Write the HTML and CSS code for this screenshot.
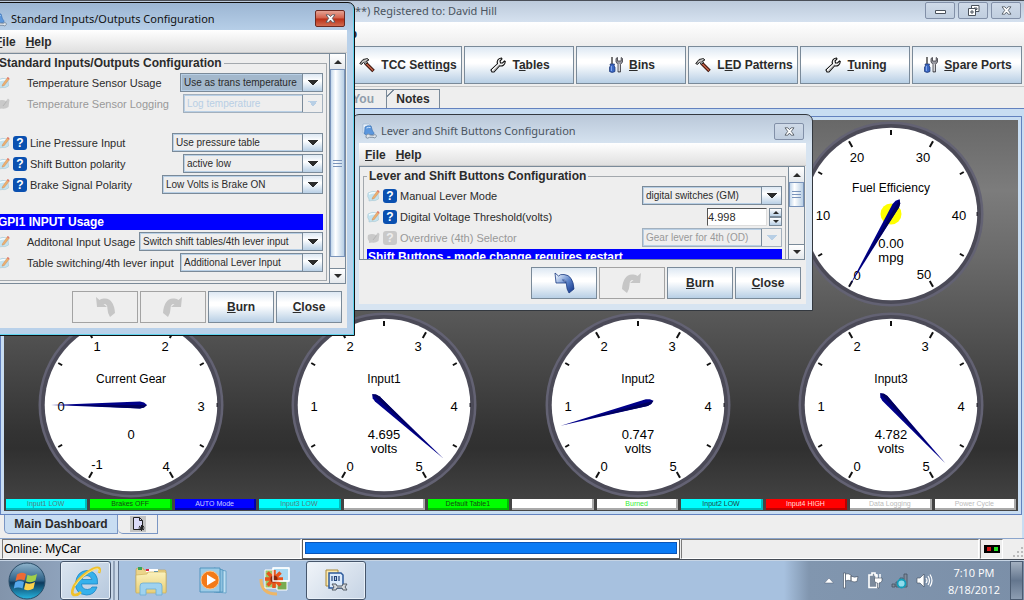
FILE: index.html
```html
<!DOCTYPE html>
<html lang="en">
<head>
<meta charset="utf-8">
<title>Main Dashboard</title>
<link rel="stylesheet" href="styles.css">
</head>
<body>
<svg class="defs" aria-hidden="true">
  <defs>
    <linearGradient id="g-orb" x1="0" y1="0" x2="0" y2="1"><stop offset="0" stop-color="#8fb4cc"/><stop offset=".48" stop-color="#2f6288"/><stop offset=".55" stop-color="#0d3a5c"/><stop offset="1" stop-color="#27b5e0"/></linearGradient>
    <linearGradient id="g-folder" x1="0" y1="0" x2="0" y2="1"><stop offset="0" stop-color="#fbf2bd"/><stop offset="1" stop-color="#e8ce76"/></linearGradient>
    <linearGradient id="g-undo" x1="0" y1="0" x2="1" y2="1"><stop offset=".1" stop-color="#e4eefc"/><stop offset=".55" stop-color="#5b82c8"/><stop offset="1" stop-color="#0c2f86"/></linearGradient>
    <g id="ticks" stroke="#111" stroke-width="2">
      <path d="M0-84V-79"/>
      <path d="M0-84V-77.500" transform="rotate(30)"/><path d="M0-84V-77.500" transform="rotate(-30)"/>
      <path d="M0-84V-77.500" transform="rotate(150)"/><path d="M0-84V-77.500" transform="rotate(-150)"/>
      <path d="M0-84V-79.500" transform="rotate(60)"/><path d="M0-84V-79.500" transform="rotate(-60)"/>
      <path d="M0-84V-79.500" transform="rotate(120)"/><path d="M0-84V-79.500" transform="rotate(-120)"/>
      <path d="M0-87V-85.500" transform="rotate(90)" stroke="#33323c" stroke-width="4"/>
    </g>
    <g id="face">
      <circle r="92.500" fill="#636273"/><circle r="90" fill="#4b4a57"/><circle r="86.300" fill="#fff"/>
      <use href="#ticks"/>
    </g>
    <g id="needle"><path d="M0 80L-3.500-9L-2.500-13L0-16L2.500-13L3.500-9Z" fill="#000089"/><path d="M0 60L0-16L2.500-13L3.500-9Z" fill="#00005c"/></g>
    <symbol id="i-hammer" viewBox="0 0 16 16"><path d="M6.500 6L14.500 14" stroke="#3b1208" stroke-width="3.600"/><path d="M6.500 6L14 13.500" stroke="#c4624a" stroke-width="1.600"/><path d="M.7 6.500L4 2.500L8.500 1.500L10 3L7.500 4L8.500 5.500L6.500 7.500L4.500 5.500L2.500 7.500Z" fill="#8d8d8d" stroke="#222" stroke-width=".9"/><path d="M3 5L8 2.600" stroke="#ddd"/></symbol>
    <symbol id="i-wrench" viewBox="0 0 16 16"><path d="M1 13L7.500 7C6.500 4 8 1.500 11.500 1L12 2L10 4L10.500 6L12.500 6L14.500 4L15.300 4.500C15 8 12.500 9.500 9.500 8.800L4 15L2 15Z" fill="#f2f2f2" stroke="#111" stroke-width="1.100"/><path d="M3.500 13.800L9.500 8" stroke="#999"/><path d="M2 13L8.500 7" stroke="#fff"/></symbol>
    <symbol id="i-tools" viewBox="0 0 14 16"><path d="M3 0V8" stroke="#555" stroke-width="1.600"/><path d="M1 7H5.500L5 9L6 10V14.500Q3 16.500.5 14.500V10L1.500 9Z" fill="#3b68c4" stroke="#18316f" stroke-width=".7"/><path d="M2.500 9V14" stroke="#83a6ea"/><path d="M7 1.500V5L9 7.500V15H11.500V7.500L13.500 5V1.500L12.200.5V4H8.500V.5Z" fill="#9a9aa2" stroke="#3a3a40" stroke-width=".8"/><path d="M10.200 7V14" stroke="#eee"/></symbol>
    <symbol id="i-note" viewBox="0 0 13 13"><path d="M1 4Q5 1 11 3.500L11.500 10Q8 12.500 5 11.500L2 12L2 10Q0 8 1 4Z" fill="#c3e3f0" stroke="#a9c8d4" stroke-width=".6"/><path d="M2 5Q6 3 9 4" stroke="#f4fcff" stroke-width="1.500" fill="none"/><path d="M5.500 8.500L10.500 1.500L12.300 3L7.300 9.500L5 10.200Z" fill="#efb06f" stroke="#c28755" stroke-width=".4"/><path d="M10 2.300L11.700 3.600L12.500 2.500L11 1Z" fill="#e0776c"/></symbol>
    <symbol id="i-note-off" viewBox="0 0 13 13"><path d="M1 4Q5 2 9 4L11 1.500L12.500 3L11.500 10Q8 12.500 5 11.500L2 12L2 10Q0 8 1 4Z" fill="#c9c9c9"/><path d="M6 9L9.500 4.500" stroke="#b4b4b4"/></symbol>
    <symbol id="i-undo" viewBox="0 0 24 24"><path d="M3 2L4 12L14 12L10.500 9Q14.500 8.500 14.500 14Q14.500 18 17 22L22 18Q21 4 12 3.500Q8 3 6.500 5Z"/></symbol>
    <symbol id="i-app" viewBox="0 0 16 16"><path d="M2 1H8L10 3V10H2Z" fill="#e9f1fa" stroke="#9db4cd" stroke-width=".7"/><path d="M4 4Q6.500 2 10 3L11.500 8Q13 9 13 11L8 13L3.500 11Z" fill="#5b97dd" stroke="#3f76b8" stroke-width=".7"/><path d="M5.500 5Q7.500 4 9.500 4.500" stroke="#cfe6ff" fill="none"/><path d="M5 12.500Q7 9.500 9 12L12.500 12.300Q15 10.500 15.400 13.500Q14 16 12 14.300L8.500 14.300Q6.500 16 5 14.500Z" fill="#dfe5eb" stroke="#6d7f92" stroke-width=".8"/></symbol>
    <symbol id="i-x" viewBox="0 0 13 11"><path d="M1 1H4.500L6.500 3.200L8.500 1H12L8.700 5.300L12 10H8.500L6.500 7.400L4.500 10H1L4.300 5.300Z" fill="#fff" stroke="#4a525c"/></symbol>
  </defs>
</svg>

<div class="desktop">
  <main class="app">
    <header class="app-title">
      <span class="app-name">**) Registered to: David Hill</span>
      <div class="win-controls">
        <button class="win-btn" aria-label="Minimize"><svg width="13" height="11" viewBox="0 0 13 11"><path d="M1.500 5.500H11.500V8.500H1.500Z" fill="#fff" stroke="#4a525c"/></svg></button>
        <button class="win-btn" aria-label="Restore"><svg width="13" height="11" viewBox="0 0 13 11"><path d="M4.500.5H12V6.500H4.500Z" fill="#fff" stroke="#4a525c"/><path d="M7 3H10V4.500H7Z" fill="none" stroke="#4a525c"/><path d="M1.500 3.500H8.500V10.500H1.500Z" fill="#fff" stroke="#4a525c"/><path d="M4 6H6V8H4Z" fill="#fff" stroke="#4a525c"/></svg></button>
        <button class="win-btn" aria-label="Close"><svg width="11" height="9"><use href="#i-x"/></svg></button>
      </div>
    </header>
    <nav class="app-menu"><button class="menu-item">Help</button></nav>
    <div class="toolbar">
      <button class="btn tool"><svg width="16" height="16"><use href="#i-hammer"/></svg><span>TCC Setti<u>n</u>gs</span></button>
      <button class="btn tool"><svg width="16" height="16"><use href="#i-wrench"/></svg><span>T<u>a</u>bles</span></button>
      <button class="btn tool"><svg width="14" height="16"><use href="#i-tools"/></svg><span><u>B</u>ins</span></button>
      <button class="btn tool"><svg width="16" height="16"><use href="#i-hammer"/></svg><span>L<u>E</u>D Patterns</span></button>
      <button class="btn tool"><svg width="16" height="16"><use href="#i-wrench"/></svg><span><u>T</u>uning</span></button>
      <button class="btn tool"><svg width="14" height="16"><use href="#i-tools"/></svg><span><u>S</u>pare Ports</span></button>
    </div>
    <div class="top-tabs">
      <button class="tab tab-off" disabled>You</button>
      <button class="tab tab-notes">Notes</button>
    </div>
    <section class="workspace">
      <div class="frame">
        <div class="canvas">
          <div class="gauges">
            <svg class="gauge gauge-fuel" width="186" height="186" viewBox="-93 -93 186 186">
              <use href="#face"/><circle r="10.500" fill="#ff0"/>
              <g class="num"><text x="-34" y="-52">20</text><text x="32" y="-52">30</text><text x="-68" y="6">10</text><text x="68" y="6">40</text><text x="-34" y="66">0</text><text x="33" y="65">50</text><text y="34">0.00</text><text y="48">mpg</text></g>
              <text class="name" y="-22">Fuel Efficiency</text>
              <use href="#needle" transform="rotate(30) scale(1.06)"/>
            </svg>
            <svg class="gauge" width="186" height="186" viewBox="-93 -93 186 186">
              <use href="#face"/>
              <g class="num"><text x="-34" y="-54">1</text><text x="34" y="-54">2</text><text x="-70" y="6">0</text><text x="70" y="6">3</text><text x="-34" y="64">-1</text><text x="35" y="66">4</text><text y="34">0</text></g>
              <text class="name" y="-22">Current Gear</text>
              <use href="#needle" transform="rotate(90)"/>
            </svg>
            <svg class="gauge" width="186" height="186" viewBox="-93 -93 186 186">
              <use href="#face"/>
              <g class="num"><text x="-34" y="-54">2</text><text x="34" y="-54">3</text><text x="-70" y="6">1</text><text x="70" y="6">4</text><text x="-34" y="66">0</text><text x="35" y="66">5</text><text y="34">4.695</text><text y="48">volts</text></g>
              <text class="name" y="-22">Input1</text>
              <use href="#needle" transform="rotate(312)"/>
            </svg>
            <svg class="gauge" width="186" height="186" viewBox="-93 -93 186 186">
              <use href="#face"/>
              <g class="num"><text x="-34" y="-54">2</text><text x="34" y="-54">3</text><text x="-70" y="6">1</text><text x="70" y="6">4</text><text x="-34" y="66">0</text><text x="35" y="66">5</text><text y="34">0.747</text><text y="48">volts</text></g>
              <text class="name" y="-22">Input2</text>
              <use href="#needle" transform="rotate(75)"/>
            </svg>
            <svg class="gauge" width="186" height="186" viewBox="-93 -93 186 186">
              <use href="#face"/>
              <g class="num"><text x="-34" y="-54">2</text><text x="34" y="-54">3</text><text x="-70" y="6">1</text><text x="70" y="6">4</text><text x="-34" y="66">0</text><text x="35" y="66">5</text><text y="34">4.782</text><text y="48">volts</text></g>
              <text class="name" y="-22">Input3</text>
              <use href="#needle" transform="rotate(317)"/>
            </svg>
          </div>
          <div class="leds">
            <span class="led cyan">Input1 LOW</span><span class="led green">Brakes OFF</span><span class="led blue">AUTO Mode</span><span class="led cyan">Input3 LOW</span><span class="led"></span><span class="led green">Default Table1</span><span class="led"></span><span class="led burned">Burned</span><span class="led cyan dark">Input2 LOW</span><span class="led red">Input4 HIGH</span><span class="led">Data Logging</span><span class="led">Power Cycle</span>
          </div>
        </div>
      </div>
      <div class="bottom-tabs">
        <button class="tab-main">Main Dashboard</button>
        <button class="tab-new" aria-label="New dashboard"><svg width="16" height="16" viewBox="0 0 16 16"><path d="M0 0H16V16H0Z" fill="#c4c4c4"/><path d="M3.500 1.500H9.500L12.500 4.500V13.500H3.500Z" fill="#dcdcf8" stroke="#222"/><path d="M9.500 1.500V4.500H12.500" fill="none" stroke="#222"/><path d="M11.500 9V15M9 10L14 14M14 10L9 14M8.500 12H14.500" stroke="#222"/></svg></button>
      </div>
    </section>
    <footer class="status">
      <span class="cell cell-text">Online: MyCar</span>
      <span class="cell cell-progress"><span class="bar"></span></span>
      <span class="cell cell-empty"></span>
      <span class="cell cell-lights"><svg width="16" height="8" viewBox="0 0 16 8"><path d="M0 0H16V8H0Z"/><path d="M3 2H7V6H3Z" fill="#d01818"/><path d="M10 2H14V6H10Z" fill="#20e020"/></svg></span>
      <svg class="grip" width="12" height="12" viewBox="0 0 12 12" fill="#bbb"><path d="M9 0h2v2h-2zM5 4h2v2h-2zM9 4h2v2h-2zM1 8h2v2h-2zM5 8h2v2h-2zM9 8h2v2h-2z"/></svg>
    </footer>
  </main>

  <section class="dialog dialog-lever">
    <header class="dlg-title">
      <svg width="16" height="16"><use href="#i-app"/></svg><h2>Lever and Shift Buttons Configuration</h2>
      <button class="win-btn" aria-label="Close"><svg width="11" height="9"><use href="#i-x"/></svg></button>
    </header>
    <div class="dlg-body">
      <nav class="dlg-menu"><button class="menu-item"><u>F</u>ile</button><button class="menu-item"><u>H</u>elp</button></nav>
      <div class="scroll scroll-short">
        <fieldset>
          <legend>Lever and Shift Buttons Configuration</legend>
          <div class="row"><svg width="13" height="13"><use href="#i-note"/></svg><button class="help" aria-label="Help">?</button><label for="mode">Manual Lever Mode</label><span class="combo w140"><select id="mode"><option>digital switches (GM)</option></select></span></div>
          <div class="row"><svg width="13" height="13"><use href="#i-note"/></svg><button class="help" aria-label="Help">?</button><label for="thr">Digital Voltage Threshold(volts)</label><span class="spinner"><input id="thr" value="4.998"><span class="spin-btns"><button class="spin up" aria-label="Increase"></button><button class="spin down" aria-label="Decrease"></button></span></span></div>
          <div class="row off"><svg width="13" height="13"><use href="#i-note-off"/></svg><button class="help" disabled aria-label="Help">?</button><label for="od">Overdrive (4th) Selector</label><span class="combo w140"><select id="od" disabled><option>Gear lever for 4th (OD)</option></select></span></div>
          <h3>Shift Buttons - mode change requires restart</h3>
        </fieldset>
        <div class="sbar"><button class="sarrow up" aria-label="Scroll up"></button><span class="thumb thumb-short"></span><button class="sarrow down" aria-label="Scroll down"></button></div>
      </div>
      <div class="actions">
        <button class="btn" aria-label="Undo"><svg width="24" height="24" fill="url(#g-undo)" stroke="#1b3a80" stroke-width=".8"><use href="#i-undo"/></svg></button>
        <button class="btn" disabled aria-label="Redo"><svg class="flip" width="24" height="24" fill="#c6c6c6"><use href="#i-undo"/></svg></button>
        <button class="btn"><span><u>B</u>urn</span></button>
        <button class="btn"><span><u>C</u>lose</span></button>
      </div>
    </div>
  </section>

  <section class="dialog dialog-io">
    <header class="dlg-title">
      <svg width="16" height="16"><use href="#i-app"/></svg><h2>Standard Inputs/Outputs Configuration</h2>
      <button class="win-btn hot" aria-label="Close"><svg width="11" height="9"><use href="#i-x"/></svg></button>
    </header>
    <div class="dlg-body">
      <nav class="dlg-menu"><button class="menu-item"><u>F</u>ile</button><button class="menu-item"><u>H</u>elp</button></nav>
      <div class="scroll scroll-tall">
        <fieldset>
          <legend>Standard Inputs/Outputs Configuration</legend>
          <div class="row plain"><svg width="13" height="13"><use href="#i-note"/></svg><label for="tsu">Temperature Sensor Usage</label><span class="combo w143 focus"><select id="tsu"><option>Use as trans temperature</option></select></span></div>
          <div class="row plain off"><svg width="13" height="13"><use href="#i-note-off"/></svg><label for="tsl">Temperature Sensor Logging</label><span class="combo w140 pale"><select id="tsl" disabled><option>Log temperature</option></select></span></div>
          <div class="spacer"></div>
          <div class="row"><svg width="13" height="13"><use href="#i-note"/></svg><button class="help" aria-label="Help">?</button><label for="lpi">Line Pressure Input</label><span class="combo w151"><select id="lpi"><option>Use pressure table</option></select></span></div>
          <div class="row"><svg width="13" height="13"><use href="#i-note"/></svg><button class="help" aria-label="Help">?</button><label for="sbp">Shift Button polarity</label><span class="combo w140"><select id="sbp"><option>active low</option></select></span></div>
          <div class="row"><svg width="13" height="13"><use href="#i-note"/></svg><button class="help" aria-label="Help">?</button><label for="bsp">Brake Signal Polarity</label><span class="combo w161"><select id="bsp"><option>Low Volts is Brake ON</option></select></span></div>
          <div class="spacer"></div>
          <h3>GPI1 INPUT Usage</h3>
          <div class="row plain"><svg width="13" height="13"><use href="#i-note"/></svg><label for="aiu">Additonal Input Usage</label><span class="combo w184"><select id="aiu"><option>Switch shift tables/4th lever input</option></select></span></div>
          <div class="row plain"><svg width="13" height="13"><use href="#i-note"/></svg><label for="tsw">Table switching/4th lever input</label><span class="combo w143"><select id="tsw"><option>Additional Lever Input</option></select></span></div>
        </fieldset>
        <div class="sbar"><button class="sarrow up" aria-label="Scroll up"></button><span class="thumb thumb-tall"></span><button class="sarrow down" aria-label="Scroll down"></button></div>
      </div>
      <div class="actions">
        <button class="btn" disabled aria-label="Undo"><svg width="24" height="24" fill="#c6c6c6"><use href="#i-undo"/></svg></button>
        <button class="btn" disabled aria-label="Redo"><svg class="flip" width="24" height="24" fill="#c6c6c6"><use href="#i-undo"/></svg></button>
        <button class="btn"><span><u>B</u>urn</span></button>
        <button class="btn"><span><u>C</u>lose</span></button>
      </div>
    </div>
  </section>

  <footer class="taskbar">
    <button class="task start" aria-label="Start"><svg width="38" height="38" viewBox="0 0 38 38"><circle cx="19" cy="19" r="18" fill="url(#g-orb)" stroke="#2a4d68"/><path d="M9 12.500Q13.500 9.500 18 12L16.500 18.500Q12 16.500 7.500 19Z" fill="#ee6a34"/><path d="M19.500 12.800Q24 15 29 12L27.500 18.500Q22.500 21.500 18 19.200Z" fill="#a1cf49"/><path d="M7 20.500Q11.500 18 16 20L14.500 26.500Q10 24.500 5.800 26.500Z" fill="#56a8ec"/><path d="M17.500 20.800Q22 23 27 20L25.500 26.500Q20.500 29.500 16 27.200Z" fill="#fcd14c"/></svg></button>
    <button class="task boxed ie" aria-label="Internet Explorer"><svg width="34" height="34" viewBox="0 0 34 34"><path d="M28.500 20H12.500Q13 25.500 18.500 25.500Q22 25.500 23 23H28Q25.500 31 17.500 31Q6 30 6.500 19Q8 7 18 6.500Q29.500 7.500 28.500 20ZM12.800 15.500H22.800Q22 11.500 18 11.500Q13.500 11.500 12.800 15.500Z" fill="#36b1ec" stroke="#1b84c4" stroke-width=".8"/><path d="M30 9Q33 1 24 5Q12 11 5 22Q1 31 6 31Q9 31 12 28" fill="none" stroke="#f0c12c" stroke-width="2.600"/><path d="M30 8Q31 3 25 5.500Q13 11 6 22" fill="none" stroke="#fff0a0" stroke-width=".8"/></svg></button>
    <span class="stack"></span>
    <button class="task" aria-label="Windows Explorer"><svg width="34" height="30" viewBox="0 0 34 30"><path d="M2 4Q2 2 4 2H9L10 4H31Q32 4 32 6V26H2Z" fill="#ecd58a" stroke="#c3a456" stroke-width=".7"/><path d="M4 1H8V4H4Z" fill="#3aa45a"/><path d="M12 3H24V6H12Z" fill="#fff"/><path d="M12 3H15V5H12Z" fill="#d24"/><path d="M20 5H24V7H20Z" fill="#38c"/><path d="M2 9L13 8L14 6H31L32 7V27H2Z" fill="url(#g-folder)" stroke="#cdb15d" stroke-width=".7"/><path d="M6 29V20Q6 17 9 17H25Q28 17 28 20V29H22V23H12V29Z" fill="#9fd2ef" stroke="#6bacd4" stroke-width=".8"/></svg></button>
    <button class="task" aria-label="Windows Media Player"><svg width="30" height="28" viewBox="0 0 30 28"><path d="M18 2L28 4V26L18 25Z" fill="#bfe0f2" stroke="#5c9dc4" stroke-width=".8"/><path d="M16 1L25 3V25L16 25Z" fill="#8dc2e0" stroke="#4b90bb" stroke-width=".8"/><path d="M2 1H22V25H2Z" fill="#9ccbe6" stroke="#4b90bb" stroke-width=".9"/><circle cx="12" cy="13" r="9" fill="#f37a18" stroke="#fbc48b"/><path d="M9 7.500L18 13L9 18.500Z" fill="#fff"/></svg></button>
    <button class="task" aria-label="Photo viewer"><svg width="32" height="30" viewBox="0 0 32 30"><path d="M2 13Q2 28 18 28" fill="none" stroke="#edb667" stroke-width="3"/><path d="M6 4H20V22H6Z" fill="#9bc76b" stroke="#fff"/><path d="M14 2H30V15H14Z" fill="#a9d8f0" stroke="#fff"/><path d="M18 15H28V24H18Z" fill="#7aab50" stroke="#fff"/><g stroke="#e8541a" stroke-width="3.500"><path d="M15 4V22M6 13H24M8.500 6.500L21.500 19.500M21.500 6.500L8.500 19.500"/></g><circle cx="15" cy="13" r="3.500" fill="#862408"/><path d="M14 2H30V15H14Z" fill="none" stroke="#fff" stroke-width="1.300"/></svg></button>
    <button class="task boxed active" aria-label="Tuning application"><svg width="26" height="26" viewBox="0 0 26 26"><path d="M3 2H15V18H3Z" fill="#fbe9ae" stroke="#a98838"/><path d="M6 5H18L20 7V20H6Z" fill="#dcebfc" stroke="#2c5a9c" stroke-width="1.500"/><path d="M9 8V13M16 8V13M11.500 8.500H13.500V12.500H11.500Z" fill="none" stroke="#23447a" stroke-width="1.200"/><path d="M9 16L13 16L14 18H19L20 16L24 16L22 19L24 22H20L19 20H14L13 22H9L11 19Z" fill="#d5d9dd" stroke="#555c66"/></svg></button>
    <div class="tray">
      <svg width="10" height="6" viewBox="0 0 10 6"><path d="M5 0L9.500 5H.5Z" fill="#fff" stroke="#50607a" stroke-width=".5"/></svg>
      <svg width="17" height="17" viewBox="0 0 17 17"><path d="M1.500 1H3.500V16H1.500Z" fill="#fff" stroke="#3c4a5c" stroke-width=".6"/><path d="M3.500 2Q6 1 9 3V9Q6 7.500 3.500 9ZM9 4Q12 6 16 4.500L15 9.500Q12 10.500 9 9Z" fill="#fff" stroke="#3c4a5c" stroke-width=".6"/></svg>
      <svg width="16" height="17" viewBox="0 0 16 17"><path d="M2 3H5V1H8V3H10V15.500H2Z" fill="#7b8a9c" stroke="#fff" stroke-width="1.600"/><path d="M9 2V6M13 2V6" stroke="#fff" stroke-width="1.500"/><path d="M7.500 6H15V9Q14 11 12 11V16H10.500V11Q8 11 7.500 9Z" fill="#fff" stroke="#3c4a5c" stroke-width=".6"/></svg>
      <svg width="17" height="16" viewBox="0 0 17 16"><path d="M1 11H4V14H1ZM5 9H8V14H5ZM9 5H12V14H9ZM13 1H16V14H13Z" fill="#7e8b9b" stroke="#44525f" stroke-width=".8"/><circle cx="10.500" cy="10.500" r="4" fill="#8fdcec" stroke="#159cb8" stroke-width="1.800"/></svg>
      <svg width="17" height="15" viewBox="0 0 17 15"><path d="M1 5H4L8 1V14L4 10H1Z" fill="#fff" stroke="#3c4a5c" stroke-width=".6"/><path d="M10 5Q12 7.500 10 10M12 3Q15 7.500 12 12M14 1.500Q18 7.500 14 13.500" fill="none" stroke="#fff" stroke-width="1.200"/></svg>
      <time class="clock"><span>7:10 PM</span><span>8/18/2012</span></time>
      <button class="peek" aria-label="Show desktop"></button>
    </div>
  </footer>
</div>
</body>
</html>
```
FILE: styles.css
```css
* { box-sizing: border-box; }
body { margin: 0; background: #eee; color: #2b2b2b; font: 12px "Liberation Sans", Arial, sans-serif; }
button, select, input { font: inherit; color: inherit; margin: 0; padding: 0; border: 0; background: none; }
h2, h3 { margin: 0; }
svg { display: block; flex: none; }
.defs { position: absolute; width: 0; height: 0; }

.desktop { position: relative; display: flex; flex-direction: column; min-height: 100vh; overflow: hidden; }
.app { flex: 1; display: flex; flex-direction: column; background: #eee; }

/* main window */
.app-title { display: flex; justify-content: space-between; align-items: flex-start; height: 22px; padding: 0 3px 0 355px; border-top: 1px solid #4a4f58; background: linear-gradient(#bccadb, #d5e1ef); }
.app-name { font: 11px/20px "Noto Sans", sans-serif; color: #4a5460; }
.win-controls { display: flex; gap: 3px; padding-top: 1px; }
.win-btn { display: flex; align-items: center; justify-content: center; width: 30px; height: 17px; border: 1px solid #8290a8; border-radius: 2px; background: linear-gradient(#cfdae8, #c0cedf); }
.win-btn.hot { border-color: #6b2a22; background: linear-gradient(#e5a394, #d3604a 48%, #b92f17 52%, #d26b50); }
.app-menu { display: flex; align-items: center; height: 23px; padding-left: 331px; background: linear-gradient(#fff, #eee); }
.menu-item { font-weight: bold; }
.toolbar { display: grid; grid-template-columns: repeat(6, 1fr); gap: 2px; padding: 1px 2px 2px 352px; border-bottom: 1px solid #c6c6c6; }
.btn { display: flex; align-items: center; justify-content: center; gap: 6px; border: 1px solid #7a8a99; background: linear-gradient(#dde8f3, #fff 35%, #fff 45%, #b8cfe5); font-weight: bold; }
.btn:disabled { border-color: #a3a3a3; background: #eee; }
.tool { height: 38px; padding-left: 2px; }
.top-tabs { display: flex; height: 21px; padding: 2px 0 0 330px; }
.tab { border: 1px solid #7a8a99; border-bottom: 0; font-weight: bold; }
.tab-off { width: 57px; padding-right: 12px; text-align: right; color: #8f9dab; }
.tab-notes { width: 53px; border-left: 0; background: linear-gradient(135deg, #eee 4px, #7a8a99 4px, #7a8a99 5px, #eee 5px); }
.workspace { flex: 1; padding: 7px 2px 0 0; border-top: 1px solid #6382bf; border-bottom: 1px solid #8ba5cc; background: #c8ddf2; }
.frame { padding: 3px; border: 1px solid #6382bf; }
.canvas { padding: 1px 0; background: linear-gradient(#686868, #7c7c7c 18%, #6a6a6a 35%, #333 80%, #303030 84%, #464646); }
.gauges { display: grid; grid-template-columns: repeat(4, 1fr); justify-items: center; row-gap: 5px; }
.gauge-fuel { grid-column: 4; }
.gauge text { text-anchor: middle; fill: #000; }
.num { font-size: 13px; }
.name { font-size: 12px; }
.leds { display: grid; grid-template-columns: repeat(12, 1fr); gap: 3px; padding: 1px 2px 0; }
.led { height: 11px; border: solid #aaa; border-width: 0 2px 2px 0; background: #fff; color: #bbb; font-size: 7px; line-height: 10px; text-align: center; white-space: nowrap; }
.led.cyan { border-color: #00bcbc; background: #0ff; color: #587c7c; }
.led.cyan.dark { color: #244; }
.led.green { border-color: #0b0; background: #0f0; color: #154a15; }
.led.blue { border-color: #00a; background: #00f; color: #ccf; }
.led.red { border-color: #b00; background: #f00; color: #fdd; }
.led.burned { color: #3e3; }
.bottom-tabs { display: flex; align-items: flex-start; height: 23px; padding-left: 4px; background: #eee; }
.tab-main, .tab-new { height: 19px; border: 1px solid #7a96c4; border-top: 0; border-bottom-left-radius: 5px; font-weight: bold; }
.tab-main { width: 114px; background: #c8ddf2; }
.tab-new { display: flex; align-items: center; justify-content: center; width: 40px; border-left: 0; }
.status { display: grid; grid-template-columns: 299px 378px 1fr 23px 20px; gap: 1px; height: 21px; padding: 0 0 1px 2px; border-bottom: 1px solid #444b55; }
.cell { border: 1px solid; border-color: #7b7b7b #fff #fff #7b7b7b; }
.cell-text { padding-left: 1px; line-height: 18px; color: #000; }
.cell-progress { padding: 2px; border-color: #5a5a5a; background: #fff; }
.bar { display: block; height: 12px; border: 1px solid #0a55b8; background: #0a7bf5; }
.cell-lights { display: flex; align-items: center; justify-content: center; }
.grip { align-self: end; justify-self: end; }

/* dialogs */
.dialog { position: absolute; padding: 0 6px 6px; border: 1px solid #33383f; border-radius: 7px 7px 0 0; }
.dialog-lever { left: 352px; top: 114px; width: 461px; background: linear-gradient(#bac8d9, #d7e4f1 30px); }
.dialog-io { left: -18px; top: 2px; width: 373px; padding: 0 7px 7px 6px; border-color: #111; background: linear-gradient(#9cb6d3, #b9d1ea 30px); box-shadow: inset -1px -1px #5fd3ee; }
.dlg-title { display: flex; align-items: center; gap: 4px; height: 28px; padding: 4px 2px 0; }
.dialog-io .dlg-title { height: 27px; }
.dlg-title h2 { flex: 1; font: 11px/20px "Noto Sans", sans-serif; color: #4a5460; white-space: nowrap; }
.dialog-io h2 { color: #111; }
.dlg-body { background: #eee; }
.dlg-menu { display: flex; gap: 10px; height: 23px; padding: 1px 6px 0; border-bottom: 1px solid #ccc; background: linear-gradient(#fff, #e0e0e0); }
.scroll { display: flex; margin-right: 1px; border: 1px solid #7a8a99; overflow: hidden; }
.scroll-short { height: 94px; }
.scroll-tall { height: 231px; }
fieldset { flex: 1; min-width: 0; display: flex; flex-direction: column; gap: 2px; margin: 2px 2px 2px 3px; padding: 2px 3px 0; border: 1px solid #a3a8ad; }
.scroll-short fieldset { height: 110px; }
legend { padding: 0 2px; font-weight: bold; line-height: 15px; }
.row { display: flex; align-items: center; gap: 3px; height: 19px; font-size: 11px; white-space: nowrap; }
.row label { flex: 1; }
.plain { gap: 17px; }
.plain label { margin-right: -17px; }
.off { color: #999; }
.help { width: 14px; height: 14px; border-radius: 3px; background: #0a50b0; color: #fff; font-size: 12px; font-weight: bold; line-height: 14px; }
.help:disabled { background: #c9c9c9; color: #eee; }
.spacer { height: 16px; }
h3 { height: 16px; padding-left: 1px; background: #00f; color: #fff; font-size: 12px; line-height: 17px; }
.combo { display: flex; height: 19px; border: 1px solid #7a8a99; background: #eee; }
.combo select { flex: 1; min-width: 0; appearance: none; padding-left: 2px; border: 1px solid #b8cfe5; border-right: 0; border-radius: 0; font-size: 10px; opacity: 1; }
.combo::after { content: ""; flex: none; width: 19px; border-left: 1px solid #7a8a99; background: conic-gradient(from 315deg at 50% 100%, #2b2b2b 90deg, transparent 90deg) 50% 6px / 10px 5px no-repeat, linear-gradient(#dde8f3, #fff 40%, #b8cfe5); }
.off .combo { border-color: #a3b0bd; }
.off .combo::after { background: conic-gradient(from 315deg at 50% 100%, #b8cfe5 90deg, transparent 90deg) 50% 6px / 10px 5px no-repeat; }
.pale { color: #b8cfe5; }
.focus select { background: #a3b8cc; }
.w140 { width: 140px; }
.w143 { width: 143px; }
.w151 { width: 151px; }
.w161 { width: 161px; }
.w184 { width: 184px; }
.spinner { display: flex; gap: 2px; width: 75px; height: 18px; }
.spinner input { flex: 1; min-width: 0; border: 1px solid; border-color: #555 #ddd #ddd #555; background: #fff; }
.spin-btns { display: flex; flex-direction: column; width: 13px; }
.spin { flex: 1; display: flex; align-items: center; justify-content: center; border: 1px solid #7a8a99; background: linear-gradient(#fff, #b8cfe5); }
.spin::after, .sarrow::after { content: ""; border: 4px solid transparent; border-top-color: #2b2b2b; border-bottom-width: 0; }
.spin::after { border-width: 3px 3px 0; }
.spin.up::after, .sarrow.up::after { transform: rotate(180deg); }
.sbar { display: flex; flex-direction: column; width: 16px; border-left: 1px solid #7a8a99; }
.sarrow { display: flex; align-items: center; justify-content: center; flex: none; height: 15px; background: linear-gradient(#fff, #e4e8ec); }
.sarrow.down { margin-top: auto; border-top: 1px solid #7a8a99; }
.thumb { border: 1px solid #7a94bb; background: linear-gradient(#7a94bb, #7a94bb) center calc(50% - 3px) / 9px 1px no-repeat, linear-gradient(#7a94bb, #7a94bb) center / 9px 1px no-repeat, linear-gradient(#7a94bb, #7a94bb) center calc(50% + 3px) / 9px 1px no-repeat, linear-gradient(90deg, #c4d8ec, #fff 35%, #b8cfe5); }
.thumb-short { height: 25px; }
.thumb-tall { height: 188px; }
.actions { display: flex; justify-content: flex-end; gap: 2px; padding: 7px 5px 5px; }
.actions .btn { width: 66px; height: 32px; }
.flip { transform: scaleX(-1); }

/* taskbar */
.taskbar { display: flex; align-items: stretch; height: 40px; background: linear-gradient(90deg, #8294ab, #8ea2bb 60px, #a7c1df 62px, #a7c1df calc(100% - 240px), #8196af calc(100% - 215px), #7b8fa8); border-top: 1px solid #c6d4e4; }
.task { display: flex; align-items: center; justify-content: center; width: 62px; }
.start { width: 54px; margin-right: 6px; }
.boxed { border: 1px solid #46566c; border-radius: 3px; background: linear-gradient(135deg, #dbe5f0, #b6c8dd); box-shadow: inset 0 0 0 1px #e8f0f8; }
.ie { width: 51px; }
.stack { width: 8px; margin-right: 1px; border-right: 1px solid #5d718c; background: linear-gradient(90deg, #c9d8e8 2px, #5d718c 3px, #c9d8e8 4px); }
.boxed.active { width: 60px; background: linear-gradient(135deg, #f0f4f9, #c5d3e4); }
.tray { display: flex; align-items: center; gap: 8px; margin-left: auto; padding-right: 1px; }
.clock { display: flex; flex-direction: column; margin: 0 2px 0 7px; color: #fff; font: 11px/17px "Open Sans", sans-serif; text-align: center; }
.peek { align-self: stretch; width: 13px; border: 1px solid #4c5c72; background: linear-gradient(#a3b0c0, #64768e 50%, #8d9db2); }
```
